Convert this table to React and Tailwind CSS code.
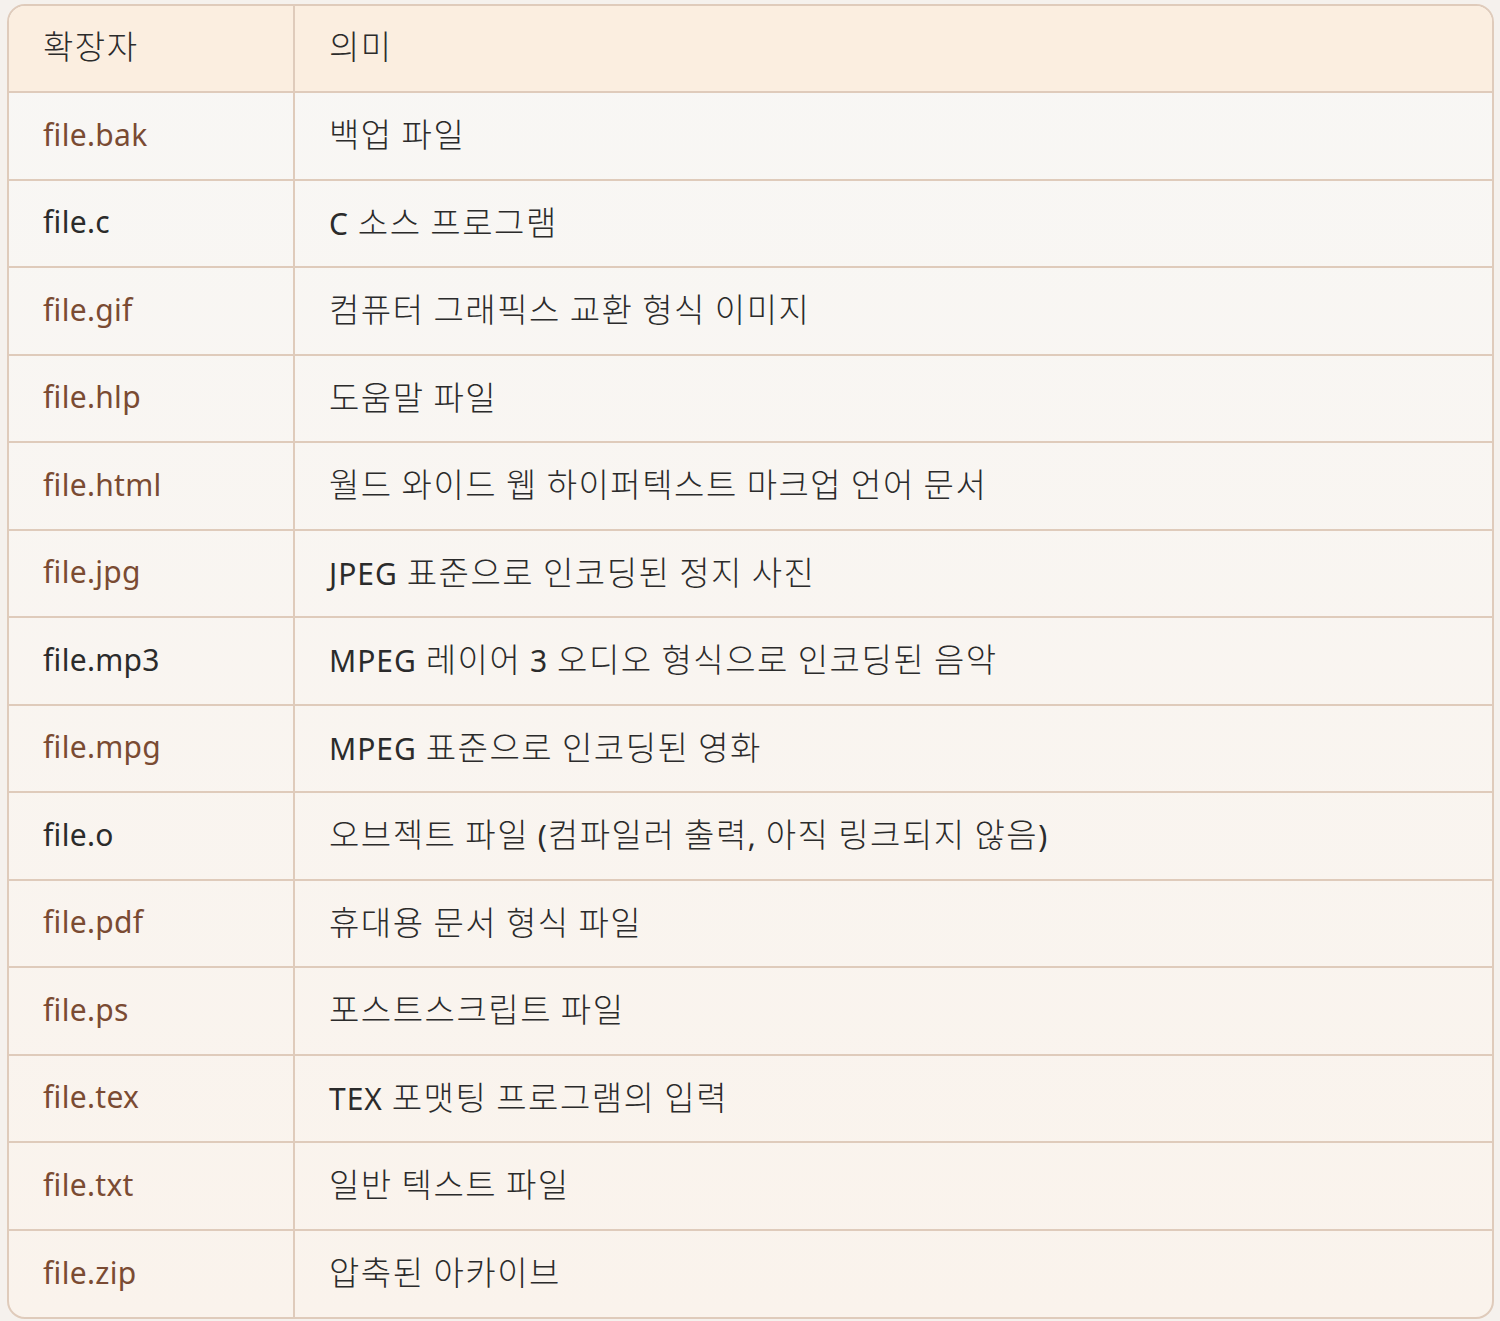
const rows = [
  { ext: 'file.bak', desc: '백업 파일', link: true },
  { ext: 'file.c', desc: 'C 소스 프로그램', link: false },
  { ext: 'file.gif', desc: '컴퓨터 그래픽스 교환 형식 이미지', link: true },
  { ext: 'file.hlp', desc: '도움말 파일', link: true },
  { ext: 'file.html', desc: '월드 와이드 웹 하이퍼텍스트 마크업 언어 문서', link: true },
  { ext: 'file.jpg', desc: 'JPEG 표준으로 인코딩된 정지 사진', link: true },
  { ext: 'file.mp3', desc: 'MPEG 레이어 3 오디오 형식으로 인코딩된 음악', link: false },
  { ext: 'file.mpg', desc: 'MPEG 표준으로 인코딩된 영화', link: true },
  { ext: 'file.o', desc: '오브젝트 파일 (컴파일러 출력, 아직 링크되지 않음)', link: false },
  { ext: 'file.pdf', desc: '휴대용 문서 형식 파일', link: true },
  { ext: 'file.ps', desc: '포스트스크립트 파일', link: true },
  { ext: 'file.tex', desc: 'TEX 포맷팅 프로그램의 입력', link: true },
  { ext: 'file.txt', desc: '일반 텍스트 파일', link: true },
  { ext: 'file.zip', desc: '압축된 아카이브', link: true },
];

// Hangul runs render larger than the Latin text in the reference
function Mixed({ text }) {
  return text.split(/([가-힣]+)/).map((part, i) =>
    /[가-힣]/.test(part) ? (
      <span key={i} className="text-[33px] font-light tracking-[1.5px]">
        {part}
      </span>
    ) : (
      <span key={i} className="tracking-[1px]">{part}</span>
    )
  );
}

export default function App() {
  return (
    <div
      className="min-h-[1321px] bg-[#f5f1ed] pt-[4px] pl-[7px] pr-[6px] pb-[3px] text-[30px] leading-none text-[#2b2b2b]"
      style={{ fontFamily: '"Noto Sans", "Noto Sans CJK KR", sans-serif' }}
    >
      <div className="overflow-hidden rounded-[18px] border-2 border-[#dfcbbb] bg-gradient-to-b from-[#f8f7f5] to-[#faf3ec]">
        <table className="w-full border-collapse">
          <thead>
            <tr className="h-[86px] bg-[#fbeee0]">
              <th className="w-[285px] border-r-2 border-[#dfcbbb] pl-[34px] pb-[4px] text-left font-normal">
                <Mixed text="확장자" />
              </th>
              <th className="pl-[34px] pb-[4px] text-left font-normal">
                <Mixed text="의미" />
              </th>
            </tr>
          </thead>
          <tbody>
            {rows.map((r) => (
              <tr key={r.ext} className="h-[87.5px] border-t-2 border-[#dfcbbb]">
                <td className={`border-r-2 border-[#dfcbbb] pl-[34px] pb-[2px] tracking-[0.3px] ${r.link ? 'text-[#7a4b33]' : 'text-[#2b2b2b]'}`}>
                  {r.ext}
                </td>
                <td className="pl-[34px] pb-[2px]">
                  <Mixed text={r.desc} />
                </td>
              </tr>
            ))}
          </tbody>
        </table>
      </div>
    </div>
  );
}
